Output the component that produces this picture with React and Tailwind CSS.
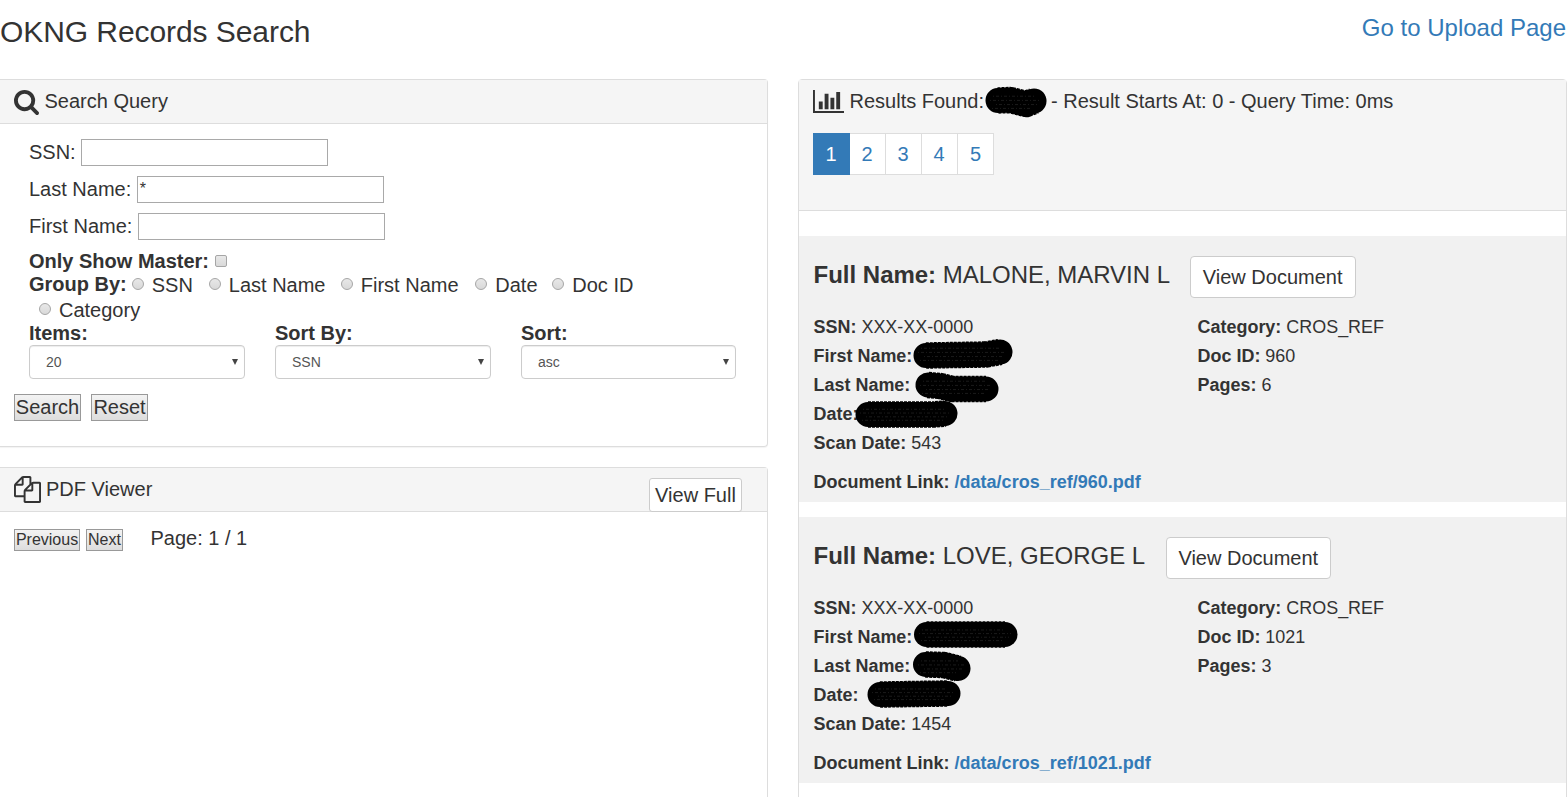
import React from 'react';

const SearchIcon = () => (
  <svg className="block h-[25px] w-[25px] shrink-0" viewBox="64 128 1664 1664" fill="currentColor">
    <path d="M1216 832q0-185-131.5-316.5t-316.5-131.5-316.5 131.5-131.5 316.5 131.5 316.5 316.5 131.5 316.5-131.5 131.5-316.5zm512 832q0 52-38 90t-90 38q-54 0-90-38l-343-342q-179 124-399 124-143 0-273.5-55.5t-225-150-150-225-55.5-273.5 55.5-273.5 150-225 225-150 273.5-55.5 273.5 55.5 225 150 150 225 55.5 273.5q0 220-124 399l343 343q37 37 37 90z" />
  </svg>
);

const FilesIcon = () => (
  <svg className="block h-[27px] w-[27px] shrink-0" viewBox="0 0 1792 1792" fill="currentColor">
    <path d="M1696 384q40 0 68 28t28 68v1216q0 40-28 68t-68 28h-960q-40 0-68-28t-28-68v-288h-544q-40 0-68-28t-28-68v-672q0-40 20-88t48-76l408-408q28-28 76-48t88-20h416q40 0 68 28t28 68v328q68-40 128-40h416zm-544 213l-299 299h299v-299zm-640-384l-299 299h299v-299zm196 647l316-316v-416h-384v416q0 40-28 68t-68 28h-416v640h512v-256q0-40 20-88t48-76zm956 804v-1152h-384v416q0 40-28 68t-68 28h-416v640h896z" />
  </svg>
);

const ChartIcon = () => (
  <svg className="block h-[23px] w-[31px] shrink-0" viewBox="0 128 2048 1536" preserveAspectRatio="none" fill="currentColor">
    <path d="M640 896v512h-256v-512h256zm384-512v1024h-256v-1024h256zm1024 1152v128h-2048v-1536h128v1408h1920zm-640-896v768h-256v-768h256zm384-384v1152h-256v-1152h256z" />
  </svg>
);

// Marker stroke that hides a value; drawn on top of the text row it sits in.
const Scribble = ({ className, w, h, d }) => (
  <svg className={'absolute z-10 ' + className} width={w} height={h} viewBox={`0 0 ${w} ${h}`}>
    <g fill="none" strokeLinecap="round" strokeLinejoin="round">
      <path d={d} stroke="#000" strokeWidth="25" />
      <path d={d} stroke="#000" strokeWidth="26.5" strokeLinecap="butt" strokeDasharray="3 1" />
    </g>
    <g fill="none" stroke="#2e2e2e" strokeWidth="0.6" strokeDasharray="1 2 3 2">
      <path d={`M9 ${h * 0.32}H${w - 14}M6 ${h * 0.45}H${w - 8}M12 ${h * 0.58}H${w - 10}M8 ${h * 0.7}H${w - 16}`} />
    </g>
  </svg>
);

const Radio = ({ className = '' }) => (
  <span className={'block h-3 w-3 shrink-0 rounded-full border border-[#a6a6a6] bg-linear-to-b from-[#e8e8e8] to-[#d9d9d9] ' + className} />
);

const Field = ({ label, value }) => (
  <label className="flex h-[27px] items-center">
    <span className="pr-[5.5px] leading-[27px]">{label}</span>
    <span className="block h-[27px] w-[247px] border border-[#a9a9a9] bg-white pl-0.5 text-[16px] leading-[23px]">{value}</span>
  </label>
);

const Select = ({ label, value, className }) => (
  <div className={className}>
    <div className="h-[23px] font-bold leading-[23px]">{label}</div>
    <div className="flex h-[34px] items-center justify-between rounded-[4px] border border-[#ccc] bg-white pl-4 pr-1.5 text-[14px] text-[#555] shadow-[inset_0_1px_1px_rgba(0,0,0,0.075)]">
      <span>{value}</span>
      <svg className="block h-[6px] w-[6px]" viewBox="0 0 6 6" fill="#444">
        <path d="M0 0h6L3 6z" />
      </svg>
    </div>
  </div>
);

const nativeButton = 'flex items-center justify-center border border-[#999] bg-linear-to-b from-[#f3f3f3] to-[#dddddd]';

const Row = ({ label, children }) => (
  <div className="relative h-[29px] leading-[29px]">
    <b>{label}</b> {children}
  </div>
);

const Record = ({ name, buttonSize, strokes, scan, doc, pages }) => (
  <section className="mb-[15px] h-[266px] bg-[#f1f1f1] pl-[14.6px] pt-5 text-[17.95px]">
    <div className="flex h-[42px]">
      <h3 className="whitespace-pre text-[24px] leading-[38px] tracking-[-0.02px]"><b>Full Name:</b> {name}</h3>
      <button className={'h-[42px] shrink-0 rounded-[4px] border border-[#ccc] bg-white text-[20px] leading-[40px] ' + buttonSize}>View Document</button>
    </div>
    <div className="flex pt-[15px]">
      <div className="w-[384px]">
        <Row label="SSN:">XXX-XX-0000</Row>
        <Row label="First Name:">{strokes[0]}</Row>
        <Row label="Last Name:">{strokes[1]}</Row>
        <Row label="Date:">{strokes[2]}</Row>
        <Row label="Scan Date:">{scan}</Row>
      </div>
      <div>
        <Row label="Category:">CROS_REF</Row>
        <Row label="Doc ID:">{doc}</Row>
        <Row label="Pages:">{pages}</Row>
      </div>
    </div>
    <div className="pt-[10px] text-[18px] font-bold leading-[29px]">
      Document Link: <a className="text-[#337ab7]">/data/cros_ref/{doc}.pdf</a>
    </div>
  </section>
);

export default function App() {
  return (
    <div className="h-[797px] w-[1568px] overflow-hidden bg-white font-['Liberation_Sans',Arial,sans-serif] text-[20px] text-[#333]">
      <header className="flex h-[79px] justify-between pr-0.5">
        <h1 className="text-[30px] leading-[63px] tracking-[-0.07px]">OKNG Records Search</h1>
        <a className="text-[24px] leading-[55px] text-[#337ab7]">Go to Upload Page</a>
      </header>
      <main className="flex">
        <div className="w-[768px]">
          <section className="h-[368px] rounded-r-[4px] border border-l-0 border-[#ddd] shadow-[0_1px_1px_rgba(0,0,0,0.05)]">
            <div className="flex h-[44px] items-start gap-[5.5px] border-b border-[#ddd] bg-[#f5f5f5] pl-[14px]">
              <div className="pt-[10px]"><SearchIcon /></div>
              <h2 className="leading-[42px]">Search Query</h2>
            </div>
            <div className="pl-[29px] pt-[15px]">
              <div className="flex flex-col gap-[10px]">
                <Field label="SSN:" />
                <Field label="Last Name:" value="*" />
                <Field label="First Name:" />
              </div>
              <div className="mt-[9px] flex h-[23px] items-center gap-[6px] font-bold">
                Only Show Master:
                <span className="block h-3 w-3 rounded-[2px] border border-[#a6a6a6] bg-linear-to-b from-[#e8e8e8] to-[#d9d9d9]" />
              </div>
              <div className="flex h-[24px] items-center">
                <b className="mt-[-1px]">Group By:</b>
                <Radio className="ml-[5px] mr-2" /><span className="mt-px w-[43px]">SSN</span>
                <Radio className="ml-[14px] mr-2" /><span className="mt-px w-[98px]">Last Name</span>
                <Radio className="ml-[14px] mr-2" /><span className="mt-px w-[99px]">First Name</span>
                <Radio className="ml-[15.5px] mr-2" /><span className="mt-px w-[42px]">Date</span>
                <Radio className="ml-[15px] mr-2" /><span className="mt-px">Doc ID</span>
              </div>
              <div className="flex h-[26px] items-center pl-[10px] pt-px">
                <Radio className="mb-px mr-2" />
                <span className="mt-px">Category</span>
              </div>
              <div className="flex gap-[30px]">
                <Select label="Items:" value="20" className="w-[216px]" />
                <Select label="Sort By:" value="SSN" className="w-[216px]" />
                <Select label="Sort:" value="asc" className="w-[215px]" />
              </div>
            </div>
            <div className="flex gap-[10px] pl-[14px] pt-[15px] leading-[25px]">
              <button className={nativeButton + ' h-[27px] w-[67px]'}>Search</button>
              <button className={nativeButton + ' h-[27px] w-[57px]'}>Reset</button>
            </div>
          </section>
          <section className="mt-5 h-[380px] rounded-tr-[4px] border border-l-0 border-[#ddd]">
            <div className="flex h-[44px] justify-between border-b border-[#ddd] bg-[#f5f5f5] pl-[14px] pr-[25px]">
              <div className="flex items-start gap-[5px]">
                <div className="pt-2"><FilesIcon /></div>
                <h2 className="leading-[42px]">PDF Viewer</h2>
              </div>
              <button className="mt-[10px] h-[34px] w-[93px] rounded-[3px] border border-[#ccc] bg-white leading-[32px]">View Full</button>
            </div>
            <div className="flex pl-[14px] pt-[17px]">
              <button className={nativeButton + ' h-[22px] w-[66px] text-[16px]'}>Previous</button>
              <button className={nativeButton + ' ml-[6px] h-[22px] w-[37px] text-[16px]'}>Next</button>
              <span className="ml-[27.5px] leading-[19px]">Page: 1 / 1</span>
            </div>
          </section>
        </div>
        <section className="ml-[30px] h-[740px] w-[769px] rounded-t-[4px] border border-[#ddd]">
          <div className="h-[131px] border-b border-[#ddd] bg-[#f5f5f5] pl-[14px]">
            <div className="relative flex h-[42px] items-center whitespace-nowrap">
              <ChartIcon />
              <span className="w-[140px] shrink-0 pl-[5.5px]">Results Found:</span>
              <span className="ml-[67px]">- Result Starts At: 0 - Query Time: 0ms</span>
              <Scribble className="left-[171px] top-[6px]" w={64} h={32} d="M14 14.5L26 14 42 18 50 15" />
            </div>
            <nav className="flex pt-[11px] text-center leading-[40px] text-[#337ab7]">
              <a className="h-[42px] w-[37px] border border-[#337ab7] bg-[#337ab7] pr-px text-white">1</a>
              <a className="h-[42px] w-[36px] border border-l-0 border-[#ddd] bg-white pr-px">2</a>
              <a className="h-[42px] w-[36px] border border-l-0 border-[#ddd] bg-white pr-px">3</a>
              <a className="h-[42px] w-[36px] border border-l-0 border-[#ddd] bg-white pr-px">4</a>
              <a className="h-[42px] w-[36px] border border-l-0 border-[#ddd] bg-white">5</a>
            </nav>
          </div>
          <div className="pt-[25px]">
            <Record
              name="MALONE, MARVIN L"
              buttonSize="ml-[19.6px] w-[166px]"
              scan="543"
              doc="960"
              pages="6"
              strokes={[
                <Scribble className="left-[98px] top-[-4px]" w={102} h={32} d="M14 17.5L74 16.5 88 14" />,
                <Scribble className="left-[100px] top-0" w={86} h={32} d="M14 14L26 15 38 18 72 18" />,
                <Scribble className="left-[40px] top-0" w={105} h={29} d="M14 14.5L80 14.5 91 13.5" />,
              ]}
            />
            <Record
              name="LOVE, GEORGE L"
              buttonSize="ml-[20.6px] w-[165px]"
              scan="1454"
              doc="1021"
              pages="3"
              strokes={[
                <Scribble className="left-[99px] top-[-2px]" w={106} h={28} d="M13.5 13.5L92 13.5" />,
                <Scribble className="left-[98px] top-[-1px]" w={60} h={31} d="M13.5 13.5L32 14 46 17.5" />,
                <Scribble className="left-[52px] top-[-1px]" w={95} h={28} d="M14 14.5L82 13.5" />,
              ]}
            />
          </div>
        </section>
      </main>
    </div>
  );
}
